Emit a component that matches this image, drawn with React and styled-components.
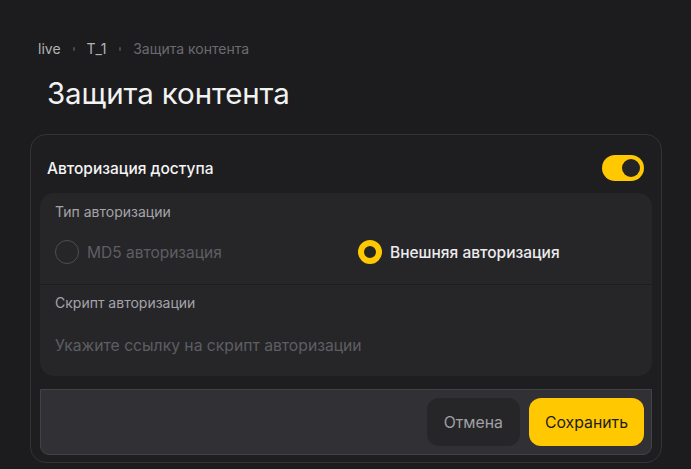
import React, { useState } from 'react';
import styled, { createGlobalStyle } from 'styled-components';

const GlobalStyle = createGlobalStyle`
    body {
        margin: 0;
        background: #1c1c1e;
        font-family: Inter, 'Noto Sans', Roboto, sans-serif;
    }
`

const Page = styled.div`
    min-height: 469px;
    box-sizing: border-box;
    padding: 39px 29px 6px 30px;
    background: #1c1c1e;
`

const Crumbs = styled.nav`
    display: flex;
    align-items: center;
    gap: 12px;
    padding-left: 8px;
    height: 19px;
    font-size: 14px;
`

const Crumb = styled.span`
    color: ${props => props.current ? '#6b6b6f' : '#b3b3b6'};
    letter-spacing: ${props => props.wide ? '0.6px' : 'normal'};
`

const Sep = styled.span`
    width: 2px;
    height: 4px;
    border-radius: 1px;
    background: #48484c;
`

const Title = styled.h1`
    margin: 17px 0 0 17px;
    font-size: 29.5px;
    line-height: 36px;
    font-weight: 400;
    color: #f2f2f2;
    letter-spacing: -0.1px;
`

const Card = styled.section`
    margin-top: 23px;
    border: 1px solid #333336;
    border-radius: 16px;
    background: #1e1e20;
    padding: 0 9px 7px 9px;
`

const CardHeader = styled.div`
    display: flex;
    align-items: center;
    justify-content: space-between;
    padding: 20px 8px 12px 7px;
`

const CardTitle = styled.span`
    font-size: 15.5px;
    font-weight: 500;
    color: #f4f4f4;
`

const Toggle = styled.button`
    width: 42px;
    height: 26px;
    border: none;
    border-radius: 13px;
    padding: 0 4px;
    display: flex;
    align-items: center;
    justify-content: ${props => props.on ? 'flex-end' : 'flex-start'};
    background: ${props => props.on ? '#ffc800' : '#3a3a3e'};
    cursor: pointer;
`

const Knob = styled.span`
    width: 18px;
    height: 18px;
    border-radius: 50%;
    background: #242427;
`

const Panel = styled.div`
    background: #262629;
    border-radius: 14px;
`

const Section = styled.div`
    padding: ${props => props.last ? '9px 15px 19px' : '10px 15px 20px'};
    border-bottom: ${props => props.last ? 'none' : '1px solid #1d1d1f'};
`

const Label = styled.div`
    font-size: 14px;
    line-height: 18px;
    color: #a4a4a8;
`

const RadioGrid = styled.div`
    display: grid;
    grid-template-columns: 1fr 1fr;
    column-gap: 24px;
    margin-top: 19px;
`

const RadioItem = styled.label`
    display: flex;
    align-items: center;
    gap: 8px;
    font-size: 15.5px;
    font-weight: ${props => props.checked ? 500 : 400};
    color: ${props => props.disabled ? '#5e5e62' : '#ececee'};
    cursor: ${props => props.disabled ? 'default' : 'pointer'};
`

const RadioMark = styled.span`
    width: 24px;
    height: 24px;
    box-sizing: border-box;
    border-radius: 50%;
    border: ${props => props.checked ? '6px solid #ffc800' : '1.5px solid #4e4e52'};
    background: ${props => props.checked ? '#242427' : 'transparent'};
    flex-shrink: 0;
`

const Input = styled.input`
    display: block;
    width: 100%;
    margin-top: 23px;
    padding: 0;
    border: none;
    outline: none;
    background: transparent;
    font-family: inherit;
    font-size: 15.7px;
    line-height: 22px;
    color: #ececee;
    &::placeholder {
        color: #5e5e62;
    }
`

const Footer = styled.div`
    margin-top: 13px;
    display: flex;
    justify-content: flex-end;
    gap: 9px;
    padding: 8px 7px;
    background: #313135;
    border: 1px solid #434347;
    border-radius: 0 0 9px 9px;
`

const Button = styled.button`
    height: 48px;
    padding: 0 ${props => props.primary ? '16px' : '17px'};
    border: none;
    border-radius: 12px;
    font-family: inherit;
    font-size: 15.8px;
    cursor: pointer;
    background: ${props => props.primary ? '#ffc800' : '#262629'};
    color: ${props => props.primary ? '#1c1c1e' : '#a0a0a4'};
`

function App() {
    const [enabled, setEnabled] = useState(true)
    const [script, setScript] = useState('')

    return (
        <Page>
            <GlobalStyle />
            <Crumbs>
                <Crumb>live</Crumb>
                <Sep />
                <Crumb wide>T_1</Crumb>
                <Sep />
                <Crumb current>Защита контента</Crumb>
            </Crumbs>
            <Title>Защита контента</Title>
            <Card>
                <CardHeader>
                    <CardTitle>Авторизация доступа</CardTitle>
                    <Toggle on={enabled ? 1 : 0} onClick={() => setEnabled(!enabled)}>
                        <Knob />
                    </Toggle>
                </CardHeader>
                <Panel>
                    <Section>
                        <Label>Тип авторизации</Label>
                        <RadioGrid>
                            <RadioItem disabled>
                                <RadioMark />
                                MD5 авторизация
                            </RadioItem>
                            <RadioItem checked>
                                <RadioMark checked />
                                Внешняя авторизация
                            </RadioItem>
                        </RadioGrid>
                    </Section>
                    <Section last>
                        <Label>Скрипт авторизации</Label>
                        <Input
                            value={script}
                            onChange={e => setScript(e.target.value)}
                            placeholder="Укажите ссылку на скрипт авторизации"
                        />
                    </Section>
                </Panel>
                <Footer>
                    <Button>Отмена</Button>
                    <Button primary>Сохранить</Button>
                </Footer>
            </Card>
        </Page>
    );
};

export default App;
